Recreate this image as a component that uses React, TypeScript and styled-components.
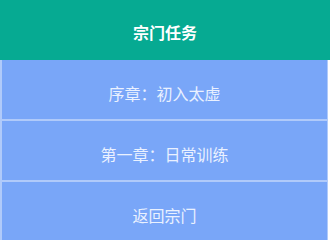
import React from "react";
import styled, { createGlobalStyle } from "styled-components";

const Global = createGlobalStyle`
  html, body { margin: 0; padding: 0; background: #ffffff; }
  body { font-family: "Noto Sans CJK SC", "Noto Sans", sans-serif; }
`;

const Page = styled.div`
  width: 330px;
  display: flex;
  flex-direction: column;
`;

const Header = styled.div`
  height: 60px;
  background: #06aa92;
  color: #ffffff;
  font-size: 16px;
  font-weight: 600;
  display: flex;
  align-items: center;
  justify-content: center;
  padding-top: 3px;
  box-sizing: border-box;
`;

const Menu = styled.div`
  width: 328px;
  display: flex;
  flex-direction: column;
`;

const MenuButton = styled.button`
  height: 61px;
  box-sizing: border-box;
  background: #79a6f8;
  border: none;
  border-left: 2px solid #b0cafa;
  border-right: 1px solid #b0cafa;
  border-bottom: 2px solid #b0cafa;
  color: #eaf1ff;
  font-family: "Noto Sans CJK SC", "Noto Sans", sans-serif;
  font-size: 16px;
  display: flex;
  align-items: center;
  justify-content: center;
  padding: 6px 0 0;
  margin: 0;
`;

export default function App() {
  return (
    <Page>
      <Global />
      <Header>宗门任务</Header>
      <Menu>
        <MenuButton>序章：初入太虚</MenuButton>
        <MenuButton>第一章：日常训练</MenuButton>
        <MenuButton>返回宗门</MenuButton>
      </Menu>
    </Page>
  );
}
